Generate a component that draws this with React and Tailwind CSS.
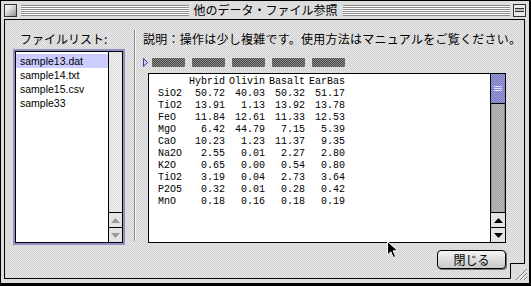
import React from "react";

const files = ["sample13.dat", "sample14.txt", "sample15.csv", "sample33"];

const header = ["Hybrid", "Olivin", "Basalt", "EarBas"];

const rows = [
  ["SiO2", "50.72", "40.03", "50.32", "51.17"],
  ["TiO2", "13.91", "1.13", "13.92", "13.78"],
  ["FeO", "11.84", "12.61", "11.33", "12.53"],
  ["MgO", "6.42", "44.79", "7.15", "5.39"],
  ["CaO", "10.23", "1.23", "11.37", "9.35"],
  ["Na2O", "2.55", "0.01", "2.27", "2.80"],
  ["K2O", "0.65", "0.00", "0.54", "0.80"],
  ["TiO2", "3.19", "0.04", "2.73", "3.64"],
  ["P2O5", "0.32", "0.01", "0.28", "0.42"],
  ["MnO", "0.18", "0.16", "0.18", "0.19"],
];

const jp = "font-['Noto_Sans_CJK_JP',sans-serif]";

const Stripes = ({ className }) => (
  <div
    className={
      "h-[11px] bg-[repeating-linear-gradient(to_bottom,#8a8a8a_0px,#8a8a8a_1px,#ffffff_1px,#ffffff_2px)] " +
      className
    }
  />
);

const ArrowBox = ({ up, disabled }) => (
  <div className="h-[15px] border-t border-black bg-[#e4e4e4] flex items-center justify-center">
    <svg width="9" height="5" viewBox="0 0 9 5">
      {up ? (
        <path d="M4.5 0 L9 5 L0 5 Z" fill={disabled ? "#9a9a9a" : "#000"} />
      ) : (
        <path d="M0 0 L9 0 L4.5 5 Z" fill={disabled ? "#9a9a9a" : "#000"} />
      )}
    </svg>
  </div>
);

const App = () => {
  return (
    <div className="w-[531px] h-[286px] bg-white">
      <div className="relative w-[531px] h-[286px] flex flex-col bg-[#dddddd] border-l border-t border-r-2 border-b-[3px] border-black overflow-hidden">
        {/* title bar */}
        <div className="h-[18px] flex items-center px-[3px]">
          <div className="w-[13px] h-[13px] border border-[#333] bg-[linear-gradient(135deg,#ffffff_0%,#d8d8d8_45%,#8c8c8c_100%)]" />
          <Stripes className="flex-1 ml-[4px]" />
          <div className={`px-[5px] text-[12px] leading-[18px] text-black ${jp}`}>
            他のデータ・ファイル参照
          </div>
          <Stripes className="flex-1 mr-[3px]" />
          <div className="w-[13px] h-[13px] border border-[#333] bg-[#e8e8e8] flex flex-col justify-center px-[1px]">
            <div className="h-[4px] border-y border-[#333] bg-[#bbbbbb]" />
          </div>
        </div>

        {/* content */}
        <div className="relative flex-1 ml-[3px] mr-[4px] mb-[4px] border border-black bg-[repeating-conic-gradient(#d2d2d2_0%_25%,#e6e6e6_0%_50%)] bg-[length:2px_2px] flex pt-[12px] pl-[8px]">
          {/* file list column */}
          <div className="w-[112px] flex flex-col">
            <div className={`h-[17px] ml-[7px] text-[12px] leading-[14px] text-black ${jp}`}>
              ファイルリスト:
            </div>
            <div className="h-[196px] border-2 border-[#8e8ec4]">
              <div className="h-full border border-black flex">
                <div className="flex-1 bg-white pt-[2px] font-['Liberation_Sans',sans-serif] text-[10.5px] text-black">
                  {files.map((f, i) => (
                    <div
                      key={f}
                      className={
                        "h-[14px] leading-[14px] pl-[4px] " +
                        (i === 0 ? "bg-[#ccccff]" : "")
                      }
                    >
                      {f}
                    </div>
                  ))}
                </div>
                <div className="w-[14px] border-l border-black flex flex-col">
                  <div className="flex-1 bg-[repeating-conic-gradient(#dcdcdc_0%_25%,#f2f2f2_0%_50%)] bg-[length:2px_2px]" />
                  <ArrowBox up disabled />
                  <ArrowBox disabled />
                </div>
              </div>
            </div>
          </div>

          {/* separator */}
          <div className="ml-[9px] mt-[-2px] w-[2px] h-[211px] border-l border-[#8a8a8a] border-r border-r-[#f4f4f4]" />

          {/* right column */}
          <div className="ml-[7px] flex flex-col">
            <div className={`h-[14px] text-[12px] leading-[14px] tracking-[0.25px] text-black whitespace-nowrap ${jp}`}>
              説明：操作は少し複雑です。使用方法はマニュアルをご覧ください。
            </div>

            <div className="mt-[12px] h-[9px] flex items-center">
              <svg width="5" height="9" viewBox="0 0 5 9">
                <path d="M0.5 0.5 L4.5 4.5 L0.5 8.5 Z" fill="#ccccff" stroke="#3a3aa0" strokeWidth="1" />
              </svg>
              <div className="ml-[4px] flex gap-[7px]">
                {[0, 1, 2, 3, 4].map((k) => (
                  <div
                    key={k}
                    className="w-[33px] h-[9px] bg-[repeating-conic-gradient(#4a4a4a_0%_25%,#8a8a8a_0%_50%)] bg-[length:2px_2px]"
                  />
                ))}
              </div>
            </div>

            <div className="ml-[5px] mt-[6px] w-[358px] flex flex-col">
              <div className="h-[170px] border border-black flex">
                <div className="flex-1 bg-white pl-[9px] pt-[2px] font-['Liberation_Mono',monospace] text-[10px] leading-[12px] text-black">
                  <div className="grid grid-cols-[27px_40px_40px_40px_40px]">
                    <div />
                    {header.map((h) => (
                      <div key={h} className="text-right whitespace-pre">
                        {h}
                      </div>
                    ))}
                    {rows.map((r, i) => (
                      <React.Fragment key={i}>
                        <div className="whitespace-pre">{r[0]}</div>
                        {r.slice(1).map((v, j) => (
                          <div key={j} className="text-right">
                            {v}
                          </div>
                        ))}
                      </React.Fragment>
                    ))}
                  </div>
                </div>
                <div className="w-[15px] border-l border-black flex flex-col">
                  <div className="h-[30px] border-b border-black bg-[repeating-conic-gradient(#7c7cc4_0%_25%,#9a9ad8_0%_50%)] bg-[length:2px_2px] flex flex-col items-center justify-center gap-[1px]">
                    <div className="w-[8px] h-[1px] bg-[#e0e0ff]" />
                    <div className="w-[8px] h-[1px] bg-[#e0e0ff]" />
                    <div className="w-[8px] h-[1px] bg-[#e0e0ff]" />
                  </div>
                  <div className="flex-1 border-x border-[#8a8a8a] bg-[repeating-conic-gradient(#a2a2a2_0%_25%,#bdbdbd_0%_50%)] bg-[length:2px_2px]" />
                  <ArrowBox up />
                  <ArrowBox />
                </div>
              </div>

              <div className="mt-[7px] flex justify-end">
                <button
                  className={`w-[69px] h-[19px] rounded-[4px] border border-black bg-[linear-gradient(to_bottom,#f4f4f4,#c8c8c8)] shadow-[1px_1px_0_#6f6f6f] text-[12px] leading-[17px] text-black ${jp}`}
                >
                  閉じる
                </button>
              </div>
            </div>
          </div>
        </div>

        {/* grow box */}
        <svg
          className="absolute left-[509px] top-[262px]"
          width="19"
          height="19"
          viewBox="0 0 19 19"
        >
          <rect x="0" y="0" width="19" height="19" fill="#dddddd" />
          <path d="M0.5 0 L0.5 15.5 M0 0.5 L15 0.5" stroke="#000" strokeWidth="1" />
          <path d="M6 17 L17 6 M10 17 L17 10 M14 17 L17 14" stroke="#777" strokeWidth="1" />
          <path d="M7 17 L17 7 M11 17 L17 11 M15 17 L17 15" stroke="#fff" strokeWidth="1" />
        </svg>

        {/* mouse pointer */}
        <svg
          className="absolute left-[386px] top-[240px]"
          width="12"
          height="18"
          viewBox="0 0 12 18"
        >
          <path
            d="M0.5 0.5 L0.5 14 L3.8 10.8 L6.3 16.5 L8.6 15.5 L6.2 9.8 L10.8 9.8 Z"
            fill="#000"
            stroke="#fff"
            strokeWidth="1"
          />
        </svg>
      </div>
    </div>
  );
};

export default App;
